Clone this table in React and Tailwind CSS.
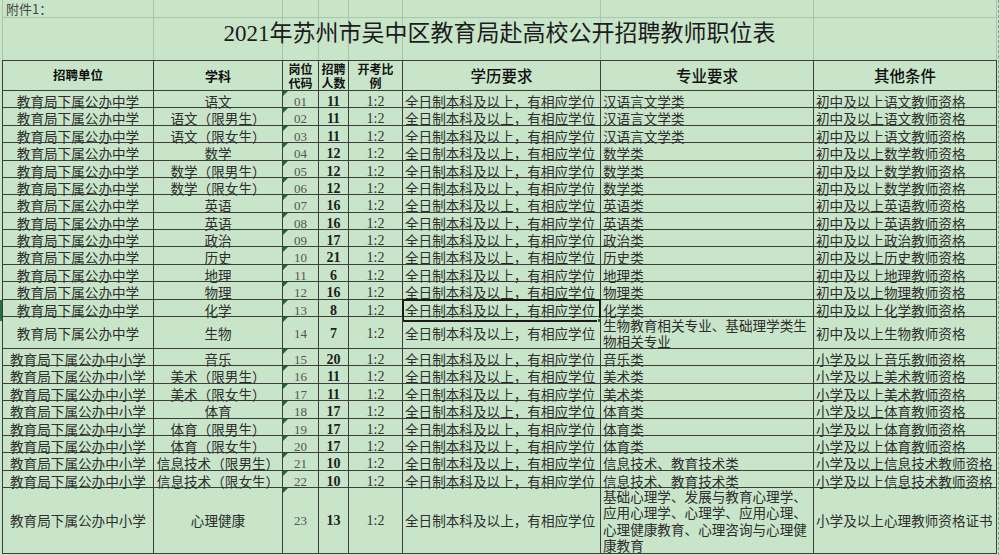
import clsx from "clsx"

const COLS = "grid grid-cols-[151px_129px_36px_30px_54px_198px_213px_183px]"
const LINE = "border-[#3e3e3e]"
const CJK = "font-['Noto_Sans_CJK_SC',sans-serif]"
const SERIF = "font-['Liberation_Serif','Noto_Sans_CJK_SC',serif]"

const MID = "教育局下属公办中学"
const MIX = "教育局下属公办中小学"
const DEGREE = "全日制本科及以上，有相应学位"

const rows = [
  { unit: MID, subject: "语文", code: "01", num: "11", major: "汉语言文学类", other: "初中及以上语文教师资格", h: "h-[17px]" },
  { unit: MID, subject: "语文（限男生）", code: "02", num: "11", major: "汉语言文学类", other: "初中及以上语文教师资格", h: "h-[18px]" },
  { unit: MID, subject: "语文（限女生）", code: "03", num: "11", major: "汉语言文学类", other: "初中及以上语文教师资格", h: "h-[17px]" },
  { unit: MID, subject: "数学", code: "04", num: "12", major: "数学类", other: "初中及以上数学教师资格", h: "h-[18px]" },
  { unit: MID, subject: "数学（限男生）", code: "05", num: "12", major: "数学类", other: "初中及以上数学教师资格", h: "h-[17px]" },
  { unit: MID, subject: "数学（限女生）", code: "06", num: "12", major: "数学类", other: "初中及以上数学教师资格", h: "h-[17px]" },
  { unit: MID, subject: "英语", code: "07", num: "16", major: "英语类", other: "初中及以上英语教师资格", h: "h-[18px]" },
  { unit: MID, subject: "英语", code: "08", num: "16", major: "英语类", other: "初中及以上英语教师资格", h: "h-[17px]" },
  { unit: MID, subject: "政治", code: "09", num: "17", major: "政治类", other: "初中及以上政治教师资格", h: "h-[17px]" },
  { unit: MID, subject: "历史", code: "10", num: "21", major: "历史类", other: "初中及以上历史教师资格", h: "h-[18px]" },
  { unit: MID, subject: "地理", code: "11", num: "6", major: "地理类", other: "初中及以上地理教师资格", h: "h-[17px]" },
  { unit: MID, subject: "物理", code: "12", num: "16", major: "物理类", other: "初中及以上物理教师资格", h: "h-[18px]" },
  { unit: MID, subject: "化学", code: "13", num: "8", major: "化学类", other: "初中及以上化学教师资格", h: "h-[17px]", selected: true },
  { unit: MID, subject: "生物", code: "14", num: "7", major: "生物教育相关专业、基础理学类生物相关专业", other: "初中及以上生物教师资格", h: "h-[32px]" },
  { unit: MIX, subject: "音乐", code: "15", num: "20", major: "音乐类", other: "小学及以上音乐教师资格", h: "h-[17px]" },
  { unit: MIX, subject: "美术（限男生）", code: "16", num: "11", major: "美术类", other: "小学及以上美术教师资格", h: "h-[18px]" },
  { unit: MIX, subject: "美术（限女生）", code: "17", num: "11", major: "美术类", other: "小学及以上美术教师资格", h: "h-[17px]" },
  { unit: MIX, subject: "体育", code: "18", num: "17", major: "体育类", other: "小学及以上体育教师资格", h: "h-[18px]" },
  { unit: MIX, subject: "体育（限男生）", code: "19", num: "17", major: "体育类", other: "小学及以上体育教师资格", h: "h-[17px]" },
  { unit: MIX, subject: "体育（限女生）", code: "20", num: "17", major: "体育类", other: "小学及以上体育教师资格", h: "h-[17px]" },
  { unit: MIX, subject: "信息技术（限男生）", code: "21", num: "10", major: "信息技术、教育技术类", other: "小学及以上信息技术教师资格", h: "h-[18px]" },
  { unit: MIX, subject: "信息技术（限女生）", code: "22", num: "10", major: "信息技术、教育技术类", other: "小学及以上信息技术教师资格", h: "h-[17px]" },
  { unit: MIX, subject: "心理健康", code: "23", num: "13", major: "基础心理学、发展与教育心理学、应用心理学、心理学、应用心理、心理健康教育、心理咨询与心理健康教育", other: "小学及以上心理教师资格证书", h: "h-[66px]" },
]

function Cell({ className, children }) {
  return (
    <div className={clsx("relative flex items-center border-r", LINE, className)}>
      {children}
    </div>
  )
}

function TopGrid() {
  const cells = []
  for (let i = 0; i < 16; i++) {
    cells.push(
      <div key={i} className={clsx("border-r border-[#a9c6aa]", i < 8 && "border-b")}>
        {i === 0 && (
          <div className={clsx(CJK, "pl-[3px] text-[13px] leading-[18px] text-[#444] whitespace-nowrap")}>附件1：</div>
        )}
      </div>
    )
  }
  return (
    <div className="relative">
      <div className={clsx(COLS, "grid-rows-[18px_42px] border-l border-[#a9c6aa]")}>{cells}</div>
      <div className="absolute left-0 right-0 top-[20px] flex justify-center">
        <h1 className={clsx(SERIF, "text-[23px] leading-[27px] text-[#1c1c1c] whitespace-nowrap")}>
          2021年苏州市吴中区教育局赴高校公开招聘教师职位表
        </h1>
      </div>
    </div>
  )
}

function HeaderRow() {
  const small = clsx(CJK, "text-[12px] leading-[14px] font-bold text-[#111] text-center")
  const big = clsx(CJK, "text-[15.5px] font-medium text-[#111]")
  return (
    <div className={clsx(COLS, "h-[30px] border-b", LINE)}>
      <Cell className="justify-center">
        <span className={clsx(CJK, "text-[12.5px] font-bold text-[#111]")}>招聘单位</span>
      </Cell>
      <Cell className="justify-center">
        <span className={clsx(CJK, "text-[13px] font-bold text-[#111]")}>学科</span>
      </Cell>
      <Cell className="justify-center">
        <span className={small}>岗位<br />代码</span>
      </Cell>
      <Cell className="justify-center">
        <span className={small}>招聘<br />人数</span>
      </Cell>
      <Cell className="justify-center">
        <span className={small}>开考比<br />例</span>
      </Cell>
      <Cell className="justify-center">
        <span className={big}>学历要求</span>
      </Cell>
      <Cell className="justify-center">
        <span className={big}>专业要求</span>
      </Cell>
      <Cell className="justify-center">
        <span className={big}>其他条件</span>
      </Cell>
    </div>
  )
}

function DataRow({ row }) {
  const text = clsx(CJK, "text-[13.6px] text-[#2e2e2e] whitespace-nowrap")
  return (
    <div className={clsx(COLS, row.h, "border-b", LINE)}>
      <Cell className="justify-center">
        {row.selected && <div className="absolute left-[-3px] top-0 bottom-0 w-[2px] bg-[#217346]" />}
        <span className={text}>{row.unit}</span>
      </Cell>
      <Cell className="justify-center">
        <span className={text}>{row.subject}</span>
      </Cell>
      <Cell className="justify-center">
        <div className="absolute left-0 top-0 h-0 w-0 border-t-[5px] border-r-[5px] border-t-[#1d6b33] border-r-transparent" />
        <span className={clsx(SERIF, "text-[13px] text-[#555]")}>{row.code}</span>
      </Cell>
      <Cell className="justify-center">
        <span className={clsx(SERIF, "text-[14px] font-bold text-[#1e1e1e]")}>{row.num}</span>
      </Cell>
      <Cell className="justify-center">
        <span className={clsx(SERIF, "text-[14px] text-[#333]")}>1:2</span>
      </Cell>
      <Cell className="pl-[2px]">
        {row.selected && (
          <div className="absolute -left-px -top-px -right-px -bottom-px border-2 border-[#1a1a1a]">
            <div className="absolute -right-[3px] -bottom-[3px] h-[5px] w-[5px] bg-[#1d6b33] border border-[#c8e5c9]" />
          </div>
        )}
        <span className={text}>{DEGREE}</span>
      </Cell>
      <Cell className="pl-[2px]">
        <span className={clsx(CJK, "text-[13.6px] leading-[16.25px] text-[#2e2e2e]")}>{row.major}</span>
      </Cell>
      <Cell className="pl-[2px]">
        <span className={text}>{row.other}</span>
      </Cell>
    </div>
  )
}

export default function App() {
  return (
    <div className="h-[555px] w-[1000px] overflow-hidden bg-[#c8e5c9]">
      <div className="ml-[2px] flex h-full">
        <div className="w-[995px] shrink-0">
          <TopGrid />
          <div className={clsx("border-l border-t", LINE)}>
            <HeaderRow />
            {rows.map((row) => (
              <DataRow key={row.code} row={row} />
            ))}
          </div>
        </div>
        <div className="ml-px h-full border-l border-dashed border-[#8a9c8b]" />
      </div>
    </div>
  )
}
